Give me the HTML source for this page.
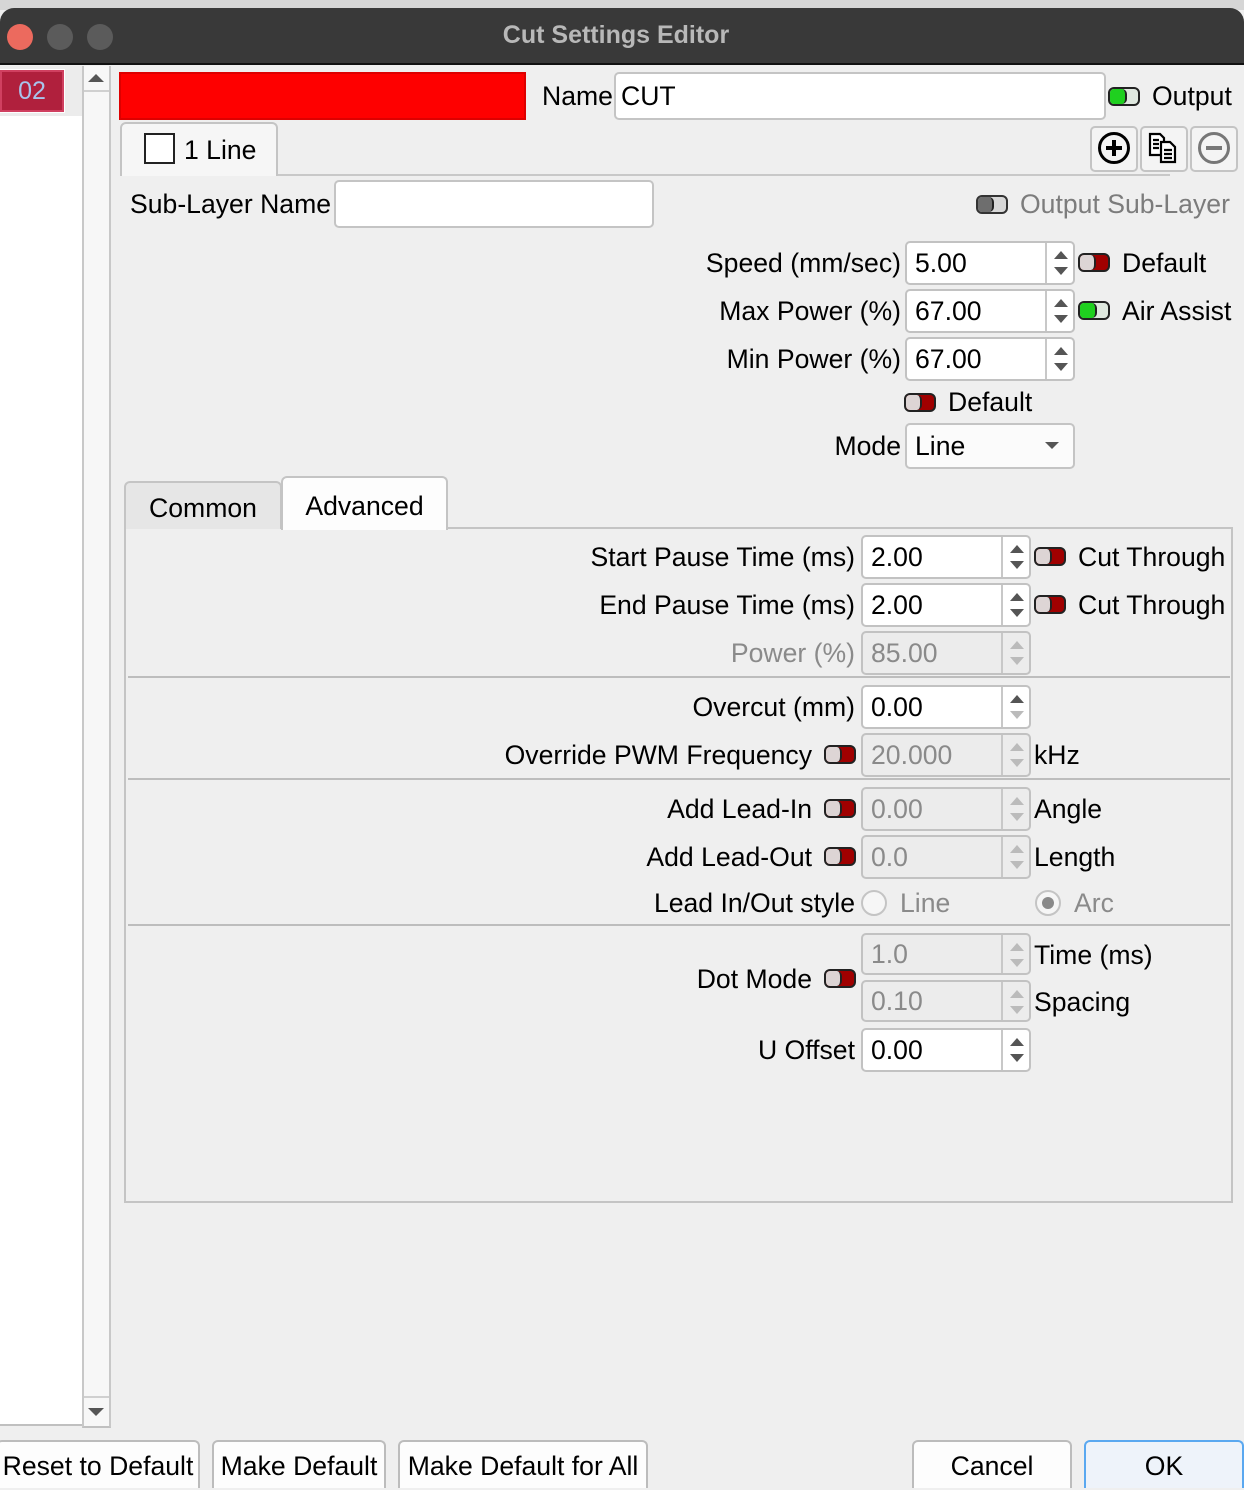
<!DOCTYPE html>
<html><head><meta charset="utf-8"><style>
*{box-sizing:border-box;margin:0;padding:0}
body{width:1244px;height:1488px;background:#efefef;font-family:"Liberation Sans",sans-serif;font-size:26.6px;color:#000;position:relative;overflow:hidden}
.a{position:absolute}
.lb{position:absolute;white-space:nowrap;height:44px;line-height:44px;text-align:right}
.sp{position:absolute;width:170px;height:44px;border:2px solid #c2c2c2;border-radius:5px;background:#fff;line-height:40px;padding-left:8px}
.sp.d{background:#ececec;color:#8a8a8a}
.sp .b{position:absolute;right:0;top:0;width:28px;height:40px;border-left:2px solid #c8c8c8}
.sp .b:before{content:"";position:absolute;left:7px;top:8px;border-left:7px solid transparent;border-right:7px solid transparent;border-bottom:8px solid #555}
.sp .b:after{content:"";position:absolute;left:7px;top:24px;border-left:7px solid transparent;border-right:7px solid transparent;border-top:8px solid #555}
.sp.d .b:before{border-bottom-color:#bbb}.sp.d .b:after{border-top-color:#bbb}
.sp.du .b:after{border-top-color:#bbb}
.tg{position:absolute;width:32px;height:19px;border:2px solid #222;border-radius:6px;overflow:hidden;background:#a00000}
.tg:before{content:"";position:absolute;left:0;top:0;width:14px;height:15px;background:#ddd5d5;border-right:2px solid #222;border-radius:0 5px 5px 0}
.tg.on{background:#dfe8df}
.tg.on:before{left:0;width:15px;background:#1fd01f;border-right:2px solid #222;border-radius:0 5px 5px 0}
.tg.gr{background:#d8d8d8;border-color:#333}
.tg.gr:before{background:#6e6e6e}
.sep{position:absolute;left:128px;width:1102px;height:2px;background:#bdbdbd}
.btn{position:absolute;top:1440px;height:48px;border:2px solid #bcbcbc;border-radius:6px 6px 0 0;border-bottom:none;background:#fdfdfd;text-align:center;line-height:48px}
</style></head><body>
<div class="a" style="left:0;top:0;width:1244px;height:10px;background:#d6d6d6"></div>
<div class="a" style="left:0;top:8px;width:1244px;height:57px;background:#393939;border-radius:14px 14px 0 0;border-bottom:2px solid #111"></div>
<div class="a" style="left:7px;top:24px;width:26px;height:26px;border-radius:50%;background:#ec6a5e"></div>
<div class="a" style="left:47px;top:24px;width:26px;height:26px;border-radius:50%;background:#5b5b5b"></div>
<div class="a" style="left:87px;top:24px;width:26px;height:26px;border-radius:50%;background:#5b5b5b"></div>
<div class="a" style="left:0;top:20px;width:1232px;text-align:center;color:#b8b8b8;font-weight:bold;font-size:25px;line-height:30px">Cut Settings Editor</div>

<div class="a" style="left:0;top:66px;width:82px;height:1360px;background:#fff;border-bottom:2px solid #c0c0c0"></div>
<div class="a" style="left:0;top:66px;width:82px;height:50px;background:#ececec"></div>
<div class="a" style="left:0;top:70px;width:64px;height:42px;background:#b0203d;border:2px solid #d04060;outline:1px solid #fff;color:#a8c4ec;text-align:center;line-height:38px;font-size:25px">02</div>
<div class="a" style="left:82px;top:66px;width:29px;height:1362px;background:#f7f7f7;border-left:2px solid #c8c8c8;border-right:2px solid #c8c8c8;border-bottom:2px solid #c0c0c0"></div>
<div class="a" style="left:84px;top:90px;width:25px;height:2px;background:#d0d0d0"></div>
<div class="a" style="left:88px;top:74px;border-left:8px solid transparent;border-right:8px solid transparent;border-bottom:8px solid #555"></div>
<div class="a" style="left:84px;top:1396px;width:25px;height:2px;background:#d0d0d0"></div>
<div class="a" style="left:88px;top:1408px;border-left:8px solid transparent;border-right:8px solid transparent;border-top:8px solid #555"></div>

<div class="a" style="left:119px;top:72px;width:407px;height:48px;background:#fe0000;border:2px solid #d00"></div>
<div class="lb" style="left:542px;top:74px">Name</div>
<div class="a" style="left:614px;top:72px;width:492px;height:48px;background:#fff;border:2px solid #c4c4c4;border-radius:5px;line-height:44px;padding-left:5px">CUT</div>
<div class="tg on" style="left:1108px;top:87px"></div>
<div class="lb" style="left:1152px;top:74px">Output</div>

<div class="a" style="left:120px;top:174px;width:1050px;height:2px;background:#c8c8c8"></div>
<div class="a" style="left:120px;top:122px;width:158px;height:54px;background:#f6f6f6;border:2px solid #c4c4c4;border-bottom:none;border-radius:6px 6px 0 0"></div>
<div class="a" style="left:144px;top:133px;width:31px;height:31px;border:2px solid #222;background:#fff"></div>
<div class="lb" style="left:184px;top:128px">1 Line</div>
<div class="a" style="left:1090px;top:126px;width:48px;height:46px;border:2px solid #c4c4c4;border-radius:5px;background:#f4f4f4"></div>
<div class="a" style="left:1140px;top:126px;width:48px;height:46px;border:2px solid #c4c4c4;border-radius:5px;background:#f4f4f4"></div>
<div class="a" style="left:1190px;top:126px;width:48px;height:46px;border:2px solid #c4c4c4;border-radius:5px;background:#f4f4f4"></div>
<svg class="a" style="left:1096px;top:130px" width="36" height="36" viewBox="0 0 36 36"><circle cx="18" cy="18" r="14.5" fill="none" stroke="#000" stroke-width="3"/><path d="M18 10v16M10 18h16" stroke="#000" stroke-width="4"/></svg>
<svg class="a" style="left:1146px;top:130px" width="36" height="36" viewBox="0 0 36 36" fill="#fff" stroke="#000" stroke-width="2.2"><path d="M4 4h10l4 4v17H4z"/><path d="M15 12h9l5 5v15H15z"/><path d="M7 10h6M7 14h6M7 18h6M18 20h8M18 24h8M18 28h8"/></svg>
<svg class="a" style="left:1196px;top:130px" width="36" height="36" viewBox="0 0 36 36"><circle cx="18" cy="18" r="14.5" fill="none" stroke="#777" stroke-width="3"/><path d="M10 18h16" stroke="#777" stroke-width="4"/></svg>

<div class="lb" style="left:130px;top:182px">Sub-Layer Name</div>
<div class="a" style="left:334px;top:180px;width:320px;height:48px;background:#fff;border:2px solid #c4c4c4;border-radius:5px"></div>
<div class="tg gr" style="left:976px;top:195px"></div>
<div class="lb" style="left:1020px;top:182px;color:#7c7c7c">Output Sub-Layer</div>

<div class="lb" style="right:343px;top:241px">Speed (mm/sec)</div>
<div class="sp" style="left:905px;top:241px">5.00<div class="b"></div></div>
<div class="tg" style="left:1078px;top:253px"></div>
<div class="lb" style="left:1122px;top:241px">Default</div>
<div class="lb" style="right:343px;top:289px">Max Power (%)</div>
<div class="sp" style="left:905px;top:289px">67.00<div class="b"></div></div>
<div class="tg on" style="left:1078px;top:301px"></div>
<div class="lb" style="left:1122px;top:289px">Air Assist</div>
<div class="lb" style="right:343px;top:337px">Min Power (%)</div>
<div class="sp" style="left:905px;top:337px">67.00<div class="b"></div></div>
<div class="tg" style="left:904px;top:393px"></div>
<div class="lb" style="left:948px;top:380px">Default</div>
<div class="lb" style="right:343px;top:424px">Mode</div>
<div class="a" style="left:905px;top:423px;width:170px;height:46px;background:#fbfbfb;border:2px solid #c4c4c4;border-radius:5px;line-height:42px;padding-left:8px">Line</div>
<div class="a" style="left:1045px;top:442px;border-left:7px solid transparent;border-right:7px solid transparent;border-top:7px solid #555"></div>

<div class="a" style="left:124px;top:481px;width:158px;height:48px;background:#e6e6e6;border:2px solid #c4c4c4;border-bottom:none;border-radius:6px 6px 0 0;text-align:center;line-height:50px">Common</div>
<div class="a" style="left:281px;top:476px;width:167px;height:54px;background:#fdfdfd;border:2px solid #c4c4c4;border-bottom:none;border-radius:6px 6px 0 0;text-align:center;line-height:56px">Advanced</div>
<div class="a" style="left:124px;top:527px;width:1109px;height:676px;border:2px solid #c4c4c4;border-top:none"></div>
<div class="a" style="left:446px;top:527px;width:787px;height:2px;background:#c4c4c4"></div>

<div class="lb" style="right:389px;top:535px">Start Pause Time (ms)</div>
<div class="sp" style="left:861px;top:535px">2.00<div class="b"></div></div>
<div class="tg" style="left:1034px;top:547px"></div>
<div class="lb" style="left:1078px;top:535px">Cut Through</div>
<div class="lb" style="right:389px;top:583px">End Pause Time (ms)</div>
<div class="sp" style="left:861px;top:583px">2.00<div class="b"></div></div>
<div class="tg" style="left:1034px;top:595px"></div>
<div class="lb" style="left:1078px;top:583px">Cut Through</div>
<div class="lb" style="right:389px;top:631px;color:#8a8a8a">Power (%)</div>
<div class="sp d" style="left:861px;top:631px">85.00<div class="b"></div></div>
<div class="sep" style="top:676px"></div>
<div class="lb" style="right:389px;top:685px">Overcut (mm)</div>
<div class="sp du" style="left:861px;top:685px">0.00<div class="b"></div></div>
<div class="lb" style="right:432px;top:733px">Override PWM Frequency</div>
<div class="tg" style="left:824px;top:745px"></div>
<div class="sp d" style="left:861px;top:733px">20.000<div class="b"></div></div>
<div class="lb" style="left:1034px;top:733px">kHz</div>
<div class="sep" style="top:778px"></div>
<div class="lb" style="right:432px;top:787px">Add Lead-In</div>
<div class="tg" style="left:824px;top:799px"></div>
<div class="sp d" style="left:861px;top:787px">0.00<div class="b"></div></div>
<div class="lb" style="left:1034px;top:787px">Angle</div>
<div class="lb" style="right:432px;top:835px">Add Lead-Out</div>
<div class="tg" style="left:824px;top:847px"></div>
<div class="sp d" style="left:861px;top:835px">0.0<div class="b"></div></div>
<div class="lb" style="left:1034px;top:835px">Length</div>
<div class="lb" style="right:389px;top:881px">Lead In/Out style</div>
<div class="a" style="left:861px;top:890px;width:26px;height:26px;border-radius:50%;border:2px solid #c4c4c4;background:#f6f6f6"></div>
<div class="lb" style="left:900px;top:881px;color:#8a8a8a">Line</div>
<div class="a" style="left:1035px;top:890px;width:26px;height:26px;border-radius:50%;border:2px solid #c4c4c4;background:#f6f6f6"></div>
<div class="a" style="left:1042px;top:897px;width:12px;height:12px;border-radius:50%;background:#8a8a8a"></div>
<div class="lb" style="left:1074px;top:881px;color:#8a8a8a">Arc</div>
<div class="sep" style="top:924px"></div>
<div class="lb" style="right:432px;top:957px">Dot Mode</div>
<div class="tg" style="left:824px;top:969px"></div>
<div class="sp d" style="left:861px;top:933px;height:42px;line-height:38px">1.0<div class="b" style="height:38px"></div></div>
<div class="lb" style="left:1034px;top:933px">Time (ms)</div>
<div class="sp d" style="left:861px;top:980px;height:42px;line-height:38px">0.10<div class="b" style="height:38px"></div></div>
<div class="lb" style="left:1034px;top:980px">Spacing</div>
<div class="lb" style="right:389px;top:1028px">U Offset</div>
<div class="sp" style="left:861px;top:1028px">0.00<div class="b"></div></div>

<div class="btn" style="left:-4px;width:204px">Reset to Default</div>
<div class="btn" style="left:212px;width:174px">Make Default</div>
<div class="btn" style="left:398px;width:250px">Make Default for All</div>
<div class="btn" style="left:912px;width:160px">Cancel</div>
<div class="btn" style="left:1084px;width:160px;border-color:#5aa8f0;background:#eef3fa">OK</div>
</body></html>
